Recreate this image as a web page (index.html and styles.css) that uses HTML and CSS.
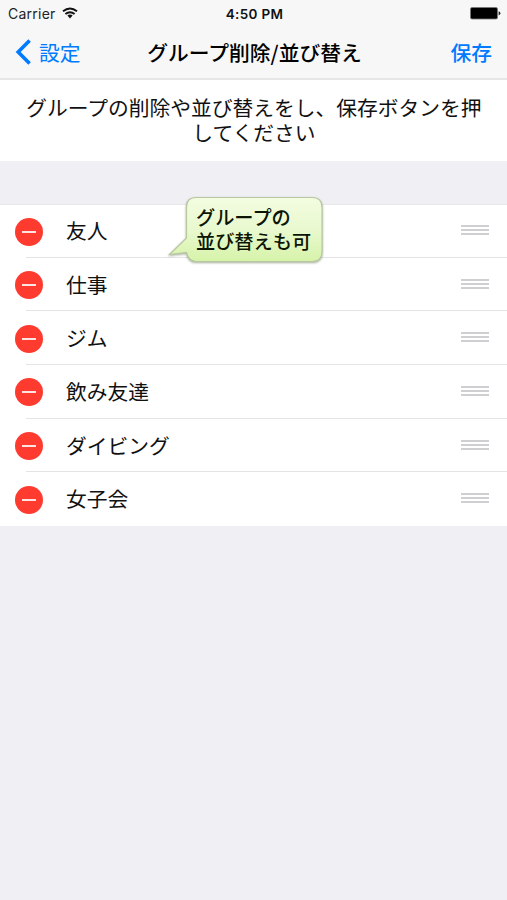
FILE: index.html
```html
<!DOCTYPE html>
<html lang="ja">
<head>
    <meta charset="UTF-8">
    <meta name="viewport" content="width=device-width, initial-scale=1.0">
    <title>グループ削除/並び替え</title>
    <link rel="stylesheet" href="styles.css">
</head>
<body>
    <header class="header">
        <div class="status">
            <div class="carrier">
                <span>Carrier</span>
                <svg class="wifi" width="16" height="12" viewBox="0 0 16 12" fill="none" stroke="#111" stroke-width="1.9">
                    <path d="M1 4.3Q8 -1.5 15 4.3"/>
                    <path d="M3.4 7Q8 3.3 12.6 7"/>
                    <path d="M5.4 8.5Q8 6.5 10.6 8.5L8 11.4Z" fill="#111" stroke="none"/>
                </svg>
            </div>
            <span class="time">4:50 PM</span>
            <svg class="battery" width="31" height="13" viewBox="0 0 31 13">
                <rect x="0.5" y="0.5" width="27" height="11.5" rx="1.5" fill="#000" stroke="#777" stroke-width="0.8"/>
                <path d="M28.6 4.2Q30.4 4.8 30.4 6.3T28.6 8.4Z" fill="#222"/>
            </svg>
        </div>
        <nav class="navbar">
            <div class="back">
                <svg width="16" height="26" viewBox="0 0 16 26" fill="none" stroke="#007aff" stroke-width="3.6">
                    <path d="M14.6 1.6L3.2 13L14.6 24.4"/>
                </svg>
                <span>設定</span>
            </div>
            <h1 class="nav-title">グループ削除/並び替え</h1>
            <span class="save">保存</span>
        </nav>
    </header>

    <p class="message">グループの削除や並び替えをし、保存ボタンを押<br>してください</p>

    <div class="group-area">
        <ul class="group-list">
            <li class="group">
                <span class="delete"></span>
                <div class="cell"><span>友人</span><span class="handle"></span></div>
            </li>
            <li class="group">
                <span class="delete"></span>
                <div class="cell"><span>仕事</span><span class="handle"></span></div>
            </li>
            <li class="group">
                <span class="delete"></span>
                <div class="cell"><span>ジム</span><span class="handle"></span></div>
            </li>
            <li class="group">
                <span class="delete"></span>
                <div class="cell"><span>飲み友達</span><span class="handle"></span></div>
            </li>
            <li class="group">
                <span class="delete"></span>
                <div class="cell"><span>ダイビング</span><span class="handle"></span></div>
            </li>
            <li class="group">
                <span class="delete"></span>
                <div class="cell"><span>女子会</span><span class="handle"></span></div>
            </li>
        </ul>

        <div class="balloon">
            <svg class="balloon-shape" width="160" height="74" viewBox="0 0 160 74">
                <defs>
                    <linearGradient id="green" x1="0" y1="0" x2="0" y2="1">
                        <stop offset="0" stop-color="#f3fce0"/>
                        <stop offset="0.5" stop-color="#e9f9cf"/>
                        <stop offset="1" stop-color="#d6f3a9"/>
                    </linearGradient>
                </defs>
                <path d="M29.5 3.5H145Q155 3.5 155 13.5V57.5Q155 67.5 145 67.5H29.5Q21.5 67.5 19.5 58.5L2.5 60.5L19.5 44V13.5Q19.5 3.5 29.5 3.5Z" fill="url(#green)" stroke="#b9c8a3" stroke-width="1.2"/>
            </svg>
            <p class="balloon-text">グループの<br>並び替えも可</p>
        </div>
    </div>
</body>
</html>
```

FILE: styles.css
```css
* {
    box-sizing: border-box;
}
body {
    margin: 0;
    min-height: 100vh;
    background-color: #efeff4;
    color: #111;
    font-family: "Noto Sans CJK JP", sans-serif;
    font-size: 20.75px;
}
.header {
    height: 80px;
    background-color: #f7f7f7;
    border-bottom: 2px solid #e6e6e7;
}
.status {
    display: grid;
    grid-template-columns: 1fr auto 1fr;
    align-items: center;
    height: 27px;
    padding: 0 6px 0 8px;
    font-family: Inter, sans-serif;
    font-size: 14px;
    color: #222;
}
.carrier {
    display: flex;
    align-items: center;
    gap: 6px;
    letter-spacing: 0.25px;
}
.wifi {
    margin-top: -2px;
}
.time {
    font-size: 13.5px;
    font-weight: 600;
    letter-spacing: 0.3px;
    color: #111;
}
.battery {
    justify-self: end;
}
.navbar {
    display: grid;
    grid-template-columns: 1fr auto 1fr;
    align-items: center;
    height: 49px;
    padding: 0 15px;
}
.back {
    display: flex;
    align-items: center;
    gap: 8px;
    color: #007aff;
}
.nav-title {
    margin: 0 -1px 0 1px;
    font-size: 20.75px;
    font-weight: 500;
    color: #000;
}
.save {
    justify-self: end;
    font-weight: 500;
    color: #007aff;
}
.message {
    margin: 0;
    height: 81px;
    padding: 15px 0 0 1px;
    background-color: #fff;
    text-align: center;
    line-height: 24.5px;
}
.group-area {
    position: relative;
    padding-top: 43px;
}
.group-list {
    margin: 0;
    padding: 0;
    list-style: none;
    background-color: #fff;
}
.group {
    display: flex;
    align-items: center;
    height: 53.7px;
    padding: 1px 0 0 15px;
    background: linear-gradient(#e4e4e6, #e4e4e6) 26px 100% / 100% 1px no-repeat;
}
.group:first-child {
    border-top: 1px solid #e8e8ec;
}
.group:last-child {
    background: none;
}
.delete {
    display: flex;
    align-items: center;
    justify-content: center;
    width: 28px;
    height: 28px;
    margin-right: 23px;
    border-radius: 50%;
    background-color: #ff3b30;
}
.delete::before {
    content: "";
    width: 14px;
    height: 2px;
    background-color: #ffe4e2;
}
.cell {
    flex: 1;
    display: flex;
    align-items: center;
    justify-content: space-between;
    padding: 0 18px 3px 0;
}
.handle {
    width: 28px;
    height: 10px;
    background: repeating-linear-gradient(#cfcfd1 0 2px, transparent 2px 4px);
}
.balloon {
    position: absolute;
    top: 33px;
    left: 167px;
}
.balloon-shape {
    display: block;
    filter: drop-shadow(0 1px 1px rgba(60, 80, 30, 0.45));
}
.balloon-text {
    position: absolute;
    top: 11px;
    left: 29px;
    margin: 0;
    font-size: 19.2px;
    font-weight: 500;
    line-height: 24px;
    white-space: nowrap;
    color: #0c1404;
}
```
